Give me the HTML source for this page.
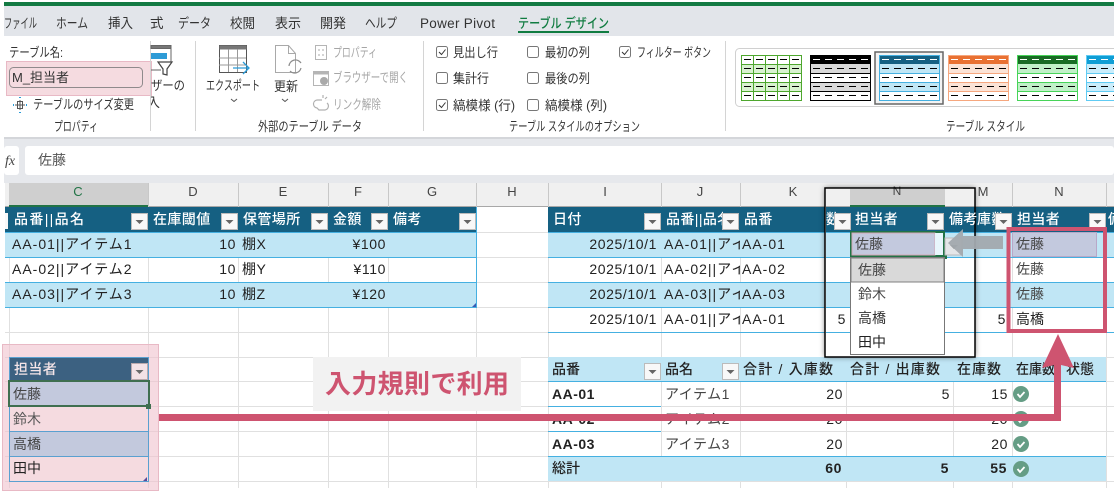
<!DOCTYPE html>
<html><head><meta charset="utf-8"><style>
html,body{margin:0;padding:0;background:#fff;width:1119px;height:494px;overflow:hidden}
svg{display:block}
text{font-family:"Liberation Sans","Noto Sans CJK JP",sans-serif;font-size:14px;fill:#222;white-space:pre}
.r{font-size:13px;fill:#333}
.g{font-size:13px;fill:#a6a6a6}
.tab{font-size:13.5px;fill:#333}
.w{fill:#fff;font-weight:500;letter-spacing:.4px}
.c{letter-spacing:1px}
.s{letter-spacing:.5px}
.e{text-anchor:end;letter-spacing:.6px}
.m{text-anchor:middle;font-size:13px;fill:#444}
.b{font-weight:700}
</style></head><body>
<svg width="1119" height="494" viewBox="0 0 1119 494" xmlns="http://www.w3.org/2000/svg">
<defs>
<g id="fb"><rect x=".5" y=".5" width="16" height="16" fill="#f8f8f8" stroke="#bbb"/><path d="M4.5 7h8l-4 4z" fill="#666"/></g>
<g id="ok"><circle r="8" fill="#659d85"/><path d="M-3.5 0l2.500 3 4.500-5" fill="none" stroke="#fff" stroke-width="1.800"/></g>
<path id="dash" d="M3 13.5h56M3 22.5h56M3 31.5h56M3 40.5h56" fill="none" stroke="#000" stroke-width="1" stroke-dasharray="7 5"/>
<path id="hd" d="M3 4.5h56" fill="none" stroke="#fff" stroke-width="1" stroke-dasharray="7 5"/>
</defs>

<rect x="4" y="2" width="1110" height="4" fill="#137a43"/>
<rect x="4" y="6" width="1110" height="30" fill="#e2e5ea"/>
<rect x="4" y="137" width="1110" height="46" fill="#e6e8ec"/>
<rect x="4" y="36" width="1110" height="101" fill="#fff"/>
<rect x="4" y="137" width="1110" height="2" fill="#d4d6da"/>

<text class="tab" x="4" y="28" textLength="33" lengthAdjust="spacingAndGlyphs">ファイル</text>
<text class="tab" x="56" y="28" textLength="32" lengthAdjust="spacingAndGlyphs">ホーム</text>
<text class="tab" x="108" y="28" textLength="25" lengthAdjust="spacingAndGlyphs">挿入</text>
<text class="tab" x="150" y="28">式</text>
<text class="tab" x="178" y="28" textLength="33" lengthAdjust="spacingAndGlyphs">データ</text>
<text class="tab" x="230" y="28" textLength="25" lengthAdjust="spacingAndGlyphs">校閲</text>
<text class="tab" x="275" y="28" textLength="26" lengthAdjust="spacingAndGlyphs">表示</text>
<text class="tab" x="320" y="28" textLength="26" lengthAdjust="spacingAndGlyphs">開発</text>
<text class="tab" x="365" y="28" textLength="32" lengthAdjust="spacingAndGlyphs">ヘルプ</text>
<text class="tab" x="420" y="28" textLength="75">Power Pivot</text>
<text class="tab" x="518" y="28" textLength="91" lengthAdjust="spacingAndGlyphs" style="fill:#107c41;font-weight:500">テーブル デザイン</text>
<rect x="518" y="31" width="91" height="2" fill="#107c41"/>

<!-- properties group -->
<text class="r" x="9" y="57" textLength="54" lengthAdjust="spacingAndGlyphs">テーブル名:</text>
<rect x="6.500" y="61.500" width="145" height="34" fill="#f5dbe0" stroke="#e8b9c5"/>
<rect x="9.500" y="67.500" width="133" height="20" rx="4" fill="#f5dbe0" stroke="#8f8a8c"/>
<text class="r" x="12" y="82">M_担当者</text>
<path d="M20 100v10M15 105h10M17.500 101.500h5v7h-5z" fill="none" stroke="#555"/>
<path d="M14 105h-1M27 105h-1M20 97v1M20 112v1" stroke="#2a9bd8" stroke-width="2"/>
<text class="r" x="33" y="109" textLength="101" lengthAdjust="spacingAndGlyphs">テーブルのサイズ変更</text>
<text class="r" x="54" y="131" textLength="44" lengthAdjust="spacingAndGlyphs">プロパティ</text>
<rect x="150" y="41" width="1" height="90" fill="#d4d4d4"/>
<rect x="195" y="41" width="1" height="90" fill="#d4d4d4"/>
<rect x="423" y="41" width="1" height="90" fill="#d4d4d4"/>
<rect x="725" y="41" width="1" height="90" fill="#d4d4d4"/>

<!-- slicer icon -->
<path d="M151 45.500h20v3h-20zM171 48v14M151 70h10" fill="#777" stroke="#666"/>
<rect x="151" y="53" width="16" height="6" fill="#2e9bd6"/>
<path d="M158 62h14l-5 7v6l-4-1v-5z" fill="#fff" stroke="#444" stroke-width="1.200"/>
<text class="r" x="151" y="90" textLength="34" lengthAdjust="spacingAndGlyphs">ザーの</text>
<svg x="151" y="92" width="20" height="20"><text class="r" x="-4" y="15">入</text></svg>

<!-- export -->
<rect x="219.500" y="45.500" width="27" height="27" fill="#fff" stroke="#555"/>
<rect x="219.500" y="45.500" width="27" height="4" fill="#777"/>
<path d="M219 58h27M219 65h27M228.500 49v23M237.500 49v23" stroke="#999" fill="none"/>
<path d="M233 68h15M243 62l6 6-6 6" fill="none" stroke="#2a9bd8" stroke-width="1.300"/>
<text class="r" x="206" y="90" textLength="54" lengthAdjust="spacingAndGlyphs">エクスポート</text>
<path d="M231 99l3 2.500 3-2.500M282 99l3 2.500 3-2.500" fill="none" stroke="#555"/>
<!-- refresh -->
<path d="M275.500 45.500h13l7 8v19h-20zM288.500 45.500v8h7" fill="#fff" stroke="#a9a9a9"/>
<path d="M289 66a6.500 6.500 0 0 1 12-3M301 68a6.500 6.500 0 0 1-11 3" fill="none" stroke="#8c8c8c" stroke-width="1.200"/>
<text class="r" x="274" y="91" textLength="24" lengthAdjust="spacingAndGlyphs">更新</text>
<!-- disabled -->
<rect x="315.500" y="45.500" width="11" height="14" fill="#fff" stroke="#b5b5b5"/>
<path d="M318 50h2M318 55h2M322 50h2M322 55h2" stroke="#aaa"/>
<text class="g" x="333" y="57" textLength="44" lengthAdjust="spacingAndGlyphs">プロパティ</text>
<rect x="313.500" y="71.500" width="15" height="14" fill="#fff" stroke="#b5b5b5"/>
<rect x="313.500" y="71.500" width="15" height="3" fill="#b5b5b5"/>
<circle cx="324" cy="81" r="4" fill="#aaa"/>
<text class="g" x="333" y="82" textLength="75" lengthAdjust="spacingAndGlyphs">ブラウザーで開く</text>
<path d="M322 100h-4a4 4 0 0 0-1 8l2 2h6a4 4 0 0 0 2-7M323 95v3M327 97l-2 2" fill="none" stroke="#b0b0b0" stroke-width="1.200"/>
<text class="g" x="333" y="109" textLength="48" lengthAdjust="spacingAndGlyphs">リンク解除</text>
<text class="r" x="258" y="131" textLength="104" lengthAdjust="spacingAndGlyphs">外部のテーブル データ</text>

<!-- checkboxes -->
<g fill="#fff" stroke="#777">
<rect x="436.500" y="46.500" width="11" height="11" rx="2"/><rect x="436.500" y="72.500" width="11" height="11" rx="2"/><rect x="436.500" y="99.500" width="11" height="11" rx="2"/>
<rect x="527.500" y="46.500" width="11" height="11" rx="2"/><rect x="527.500" y="72.500" width="11" height="11" rx="2"/><rect x="527.500" y="99.500" width="11" height="11" rx="2"/>
<rect x="619.500" y="46.500" width="11" height="11" rx="2"/>
</g>
<path d="M439 52l2.500 2.500 4-5M439 105l2.500 2.500 4-5M622 52l2.500 2.500 4-5" fill="none" stroke="#333"/>
<text class="r" x="453" y="57" textLength="45" lengthAdjust="spacingAndGlyphs">見出し行</text>
<text class="r" x="453" y="83" textLength="36" lengthAdjust="spacingAndGlyphs">集計行</text>
<text class="r" x="453" y="110" textLength="62" lengthAdjust="spacingAndGlyphs">縞模様 (行)</text>
<text class="r" x="545" y="57" textLength="45" lengthAdjust="spacingAndGlyphs">最初の列</text>
<text class="r" x="545" y="83" textLength="45" lengthAdjust="spacingAndGlyphs">最後の列</text>
<text class="r" x="545" y="110" textLength="62" lengthAdjust="spacingAndGlyphs">縞模様 (列)</text>
<text class="r" x="637" y="57" textLength="74" lengthAdjust="spacingAndGlyphs">フィルター ボタン</text>
<text class="r" x="509" y="131" textLength="131" lengthAdjust="spacingAndGlyphs">テーブル スタイルのオプション</text>
<text class="r" x="946" y="131" textLength="79" lengthAdjust="spacingAndGlyphs">テーブル スタイル</text>

<!-- gallery -->
<rect x="735.500" y="48.500" width="400" height="58" rx="4" fill="#fff" stroke="#d0d0d0"/>
<rect x="875" y="52" width="68" height="52" fill="#f3f3f3" stroke="#666" stroke-width="1.500"/>
<g transform="translate(741,55)"><rect width="61" height="46" fill="#fff"/><path d="M0 9h61v9H0zM0 27h61v9H0z" fill="#d9f2d0"/><path d="M12.500 0v46M24.500 0v46M36.500 0v46M48.500 0v46M0 9.500h61M0 18.500h61M0 27.500h61M0 36.500h61" stroke="#4ea72e" fill="none"/><rect x=".5" y=".5" width="60" height="45" fill="none" stroke="#4ea72e"/><use href="#dash"/><path d="M3 4.500h56" fill="none" stroke="#000" stroke-dasharray="7 5"/></g>
<g transform="translate(810,55)"><rect width="61" height="46" fill="#fff"/><rect width="61" height="9" fill="#000"/><path d="M0 9h61v9H0zM0 27h61v9H0z" fill="#d9d9d9"/><path d="M0 18.500h61M0 27.500h61M0 36.500h61" stroke="#000"/><rect x=".5" y=".5" width="60" height="45" fill="none" stroke="#000"/><use href="#dash"/><use href="#hd"/></g>
<g transform="translate(879,55)"><rect width="61" height="46" fill="#fff"/><rect width="61" height="9" fill="#156082"/><path d="M0 9h61v9H0zM0 27h61v9H0z" fill="#c0e6f5"/><path d="M0 18.500h61M0 27.500h61M0 36.500h61" stroke="#45b0e1"/><rect x=".5" y=".5" width="60" height="45" fill="none" stroke="#45b0e1"/><use href="#dash"/><use href="#hd"/></g>
<g transform="translate(948,55)"><rect width="61" height="46" fill="#fff"/><rect width="61" height="9" fill="#e97132"/><path d="M0 9h61v9H0zM0 27h61v9H0z" fill="#fbe3d6"/><path d="M0 18.500h61M0 27.500h61M0 36.500h61" stroke="#f6a77e"/><rect x=".5" y=".5" width="60" height="45" fill="none" stroke="#f6a77e"/><use href="#dash"/><use href="#hd"/></g>
<g transform="translate(1017,55)"><rect width="61" height="46" fill="#fff"/><rect width="61" height="9" fill="#196b24"/><path d="M0 9h61v9H0zM0 27h61v9H0z" fill="#c1f0c8"/><path d="M0 18.500h61M0 27.500h61M0 36.500h61" stroke="#47d459"/><rect x=".5" y=".5" width="60" height="45" fill="none" stroke="#47d459"/><use href="#dash"/><use href="#hd"/></g>
<g transform="translate(1086,55)"><rect width="61" height="46" fill="#fff"/><rect width="61" height="9" fill="#0f9ed5"/><path d="M0 9h61v9H0zM0 27h61v9H0z" fill="#caedfb"/><path d="M0 18.500h61M0 27.500h61M0 36.500h61" stroke="#60cbf3"/><rect x=".5" y=".5" width="60" height="45" fill="none" stroke="#60cbf3"/><use href="#dash"/><use href="#hd"/></g>
<rect x="1114" y="40" width="30" height="70" fill="#fff"/>

<!-- formula bar -->
<rect x="4" y="146" width="15" height="29" rx="3" fill="#fff"/>
<rect x="25" y="146" width="1089" height="29" rx="3" fill="#fff"/>
<text x="5" y="165" style="font-family:'Liberation Serif',serif;font-style:italic;font-size:14px;fill:#444">fx</text>
<text x="38" y="165" style="fill:#555;font-size:14px">佐藤</text>

<!-- column headers -->
<rect x="5" y="183" width="1109" height="24" fill="#f0f0f0"/>
<rect x="9" y="183" width="139" height="24" fill="#cfcfcf"/>
<rect x="5" y="206" width="1109" height="1" fill="#a8a8a8"/>
<rect x="9" y="205" width="139" height="2" fill="#217346"/>
<path d="M148.500 183v24M238.500 183v24M328.500 183v24M388.500 183v24M476.500 183v24M548.500 183v24M661.500 183v24M740.500 183v24M1012.500 183v24M1106.500 183v24" stroke="#c8c8c8"/>
<g style="text-anchor:middle">
<text class="m" x="78" y="196" style="fill:#217346">C</text>
<text class="m" x="193" y="196">D</text><text class="m" x="283" y="196">E</text><text class="m" x="358" y="196">F</text><text class="m" x="432" y="196">G</text><text class="m" x="512" y="196">H</text><text class="m" x="605" y="196">I</text><text class="m" x="700" y="196">J</text><text class="m" x="793" y="196">K</text><text class="m" x="983" y="196">M</text><text class="m" x="1059" y="196">N</text>
</g>

<!-- grid -->
<path d="M9.500 207v281M148.500 207v281M238.500 207v281M328.500 207v281M388.500 207v281M476.500 207v281M548.500 207v281M661.500 207v281M740.500 207v281M846.500 207v281M953.500 207v281M1012.500 207v281M1106.500 207v281" stroke="#e0e0e0"/>
<path d="M5 232.500h1109M5 257.500h1109M5 282.500h1109M5 307.500h1109M5 332.500h1109M5 357.500h1109M5 381.500h1109M5 406.500h1109M5 431.500h1109M5 456.500h1109M5 481.500h1109" stroke="#e0e0e0"/>

<!-- table 1 -->
<rect x="5" y="207" width="472" height="25" fill="#156082"/>
<rect x="5" y="232" width="472" height="25" fill="#c0e6f5"/>
<rect x="5" y="282" width="472" height="25" fill="#c0e6f5"/>
<path d="M5 232.500h472M5 257.500h472M5 282.500h472M5 307.500h472M476.500 207v101" stroke="#45b0e1"/>
<rect x="5" y="213" width="3" height="16" fill="#f8f8f8"/>
<text class="w" x="14" y="224" textLength="70" style="letter-spacing:0">品番||品名</text>
<text class="w" x="153" y="224">在庫閾値</text>
<text class="w" x="243" y="224">保管場所</text>
<text class="w" x="333" y="224">金額</text>
<text class="w" x="393" y="224">備考</text>
<use href="#fb" x="131" y="213"/><use href="#fb" x="221" y="213"/><use href="#fb" x="311" y="213"/><use href="#fb" x="371" y="213"/><use href="#fb" x="459" y="213"/>
<text class="c" x="12" y="249">AA-01||アイテム1</text>
<text class="c" x="12" y="274">AA-02||アイテム2</text>
<text class="c" x="12" y="299">AA-03||アイテム3</text>
<text class="e" x="236" y="249">10</text><text class="e" x="236" y="274">10</text><text class="e" x="236" y="299">10</text>
<text class="s" x="242" y="249">棚X</text><text class="s" x="242" y="274">棚Y</text><text class="s" x="242" y="299">棚Z</text>
<text class="e" x="386" y="249">¥100</text><text class="e" x="386" y="274">¥110</text><text class="e" x="386" y="299">¥120</text>
<path d="M472 307h4v-4z" fill="#3b5bb5"/>

<!-- table 2 -->
<rect x="548" y="207" width="566" height="25" fill="#156082"/>
<rect x="548" y="232" width="566" height="25" fill="#c0e6f5"/>
<rect x="548" y="282" width="566" height="25" fill="#c0e6f5"/>
<path d="M548 232.500h566M548 257.500h566M548 282.500h566M548 307.500h566M548 332.500h566" stroke="#45b0e1"/>
<text class="w" x="553" y="224">日付</text>
<svg x="661" y="207" width="62" height="25"><text class="w" x="5" y="17">品番||品名</text></svg>
<text class="w" x="744" y="224">品番</text>
<use href="#fb" x="644" y="213"/><use href="#fb" x="722" y="213"/>
<g>
<text class="e" x="657" y="249">2025/10/1</text><text class="e" x="657" y="274">2025/10/1</text><text class="e" x="657" y="299">2025/10/1</text><text class="e" x="657" y="324">2025/10/1</text>
<svg x="661" y="232" width="79" height="100">
<text class="c" x="3" y="17">AA-01||アイテム1</text><text class="c" x="3" y="42">AA-02||アイテム2</text><text class="c" x="3" y="67">AA-03||アイテム3</text><text class="c" x="3" y="92">AA-01||アイテム1</text>
</svg>
<text class="c" x="742" y="249">AA-01</text><text class="c" x="742" y="274">AA-02</text><text class="c" x="742" y="299">AA-03</text><text class="c" x="742" y="324">AA-01</text>
</g>

<!-- pivot -->
<rect x="548" y="357" width="558" height="24" fill="#c0e6f5"/>
<rect x="548" y="456" width="558" height="25" fill="#c0e6f5"/>
<path d="M548 381.500h558M548 456.500h558M548 406.500h113M548 431.500h113" stroke="#45b0e1"/>
<text class="b" x="552" y="374" style="font-weight:500">品番</text>
<text x="665" y="374" style="font-weight:500">品名</text>
<use href="#fb" x="644" y="363"/><use href="#fb" x="722" y="363"/>
<text x="743" y="374" textLength="90" style="font-weight:500">合計 / 入庫数</text>
<text x="850" y="374" textLength="90" style="font-weight:500">合計 / 出庫数</text>
<text x="957" y="374" textLength="44" style="font-weight:500">在庫数</text>
<text x="1016" y="374" textLength="39" lengthAdjust="spacingAndGlyphs" style="font-weight:500">在庫数</text>
<text x="1066" y="374" style="font-weight:500">状態</text>
<text class="b" x="552" y="399" style="letter-spacing:.5px">AA-01</text><text class="b" x="552" y="424" style="letter-spacing:.5px">AA-02</text><text class="b" x="552" y="449" style="letter-spacing:.5px">AA-03</text>
<text x="552" y="473" style="font-weight:500">総計</text>
<text x="665" y="399" style="fill:#444;letter-spacing:.5px">アイテム1</text><text x="665" y="424" style="fill:#444;letter-spacing:.5px">アイテム2</text><text x="665" y="449" style="fill:#444;letter-spacing:.5px">アイテム3</text>
<text class="e" x="843" y="399">20</text><text class="e" x="843" y="424">20</text><text class="e" x="843" y="449">20</text>
<text class="e" x="950" y="399">5</text>
<text class="e" x="1008" y="399">15</text><text class="e" x="1008" y="424">20</text><text class="e" x="1008" y="449">20</text>
<text class="e b" x="842" y="473">60</text><text class="e b" x="949" y="473">5</text><text class="e b" x="1007" y="473">55</text>
<use href="#ok" x="1021" y="394"/><use href="#ok" x="1021" y="419"/><use href="#ok" x="1021" y="444"/><use href="#ok" x="1021" y="469"/>

<!-- pasted black frame -->
<rect x="825" y="188" width="150" height="169" fill="#fff" style="filter:drop-shadow(0 0 3px rgba(0,0,0,.55))"/>
<rect x="826" y="189" width="149" height="18" fill="#f0f0f0"/>
<rect x="850" y="189" width="95" height="18" fill="#cfcfcf"/>
<rect x="826" y="206" width="149" height="1" fill="#a8a8a8"/>
<rect x="850" y="205" width="95" height="2" fill="#217346"/>
<text class="m" x="897" y="195" style="font-size:12px">N</text>
<rect x="826" y="207" width="149" height="25" fill="#156082"/>
<rect x="826" y="232" width="149" height="25" fill="#c0e6f5"/>
<rect x="826" y="282" width="149" height="25" fill="#c0e6f5"/>
<path d="M826 232.500h149M826 257.500h149M826 282.500h149M826 307.500h149M826 332.500h149" stroke="#45b0e1"/>
<svg x="826" y="207" width="14" height="25"><text class="w" x="0" y="17">数</text></svg>
<use href="#fb" x="834" y="213"/>
<text class="w" x="855" y="224">担当者</text>
<use href="#fb" x="927" y="213"/>
<text class="e" x="846" y="324">5</text>
<rect x="825" y="188" width="150" height="169" fill="none" stroke="#000" stroke-width="1.500"/>
<svg x="948" y="207" width="30" height="25"><text class="w" x="1" y="17">備考</text></svg>
<text class="w" x="977" y="224">庫数</text>
<use href="#fb" x="995" y="213"/>
<text class="w" x="1017" y="224">担当者</text>
<use href="#fb" x="1089" y="213"/>
<svg x="1107" y="207" width="7" height="25"><text class="w" x="1" y="17">備</text></svg>
<text class="e" x="1006" y="324">5</text>

<!-- selected cell -->
<rect x="851" y="232" width="93" height="24" fill="#fff" stroke="#217346" stroke-width="2"/>
<rect x="852" y="233" width="83" height="22" fill="#c3c9de" stroke="#d6a6b6"/>
<rect x="935" y="233" width="8" height="22" fill="#e8f6fc"/>
<rect x="942" y="255" width="5" height="4" fill="#217346"/>
<text x="855" y="249" style="fill:#444">佐藤</text>
<rect x="945" y="238" width="17" height="17" fill="#e4e6e8" stroke="#bbb"/>
<path d="M950 245h8l-4 4z" fill="#777"/>
<path d="M948 243l15-14v7h40v13h-40v8z" fill="#a2a9ae" opacity=".95"/>

<!-- dropdown -->
<rect x="850.500" y="257.500" width="94" height="97" fill="#fff" stroke="#777"/>
<rect x="851" y="258" width="93" height="24" fill="#d9d9d9" stroke="#808080"/>
<text x="858" y="275" style="fill:#444">佐藤</text>
<text x="858" y="299" style="fill:#444">鈴木</text>
<text x="858" y="323" style="fill:#333">高橋</text>
<text x="858" y="347">田中</text>

<!-- right column values -->
<rect x="1012.500" y="232.500" width="84" height="24" fill="#c3c9de" stroke="#b8a8c8"/>
<text x="1016" y="249" style="fill:#444">佐藤</text>
<text x="1016" y="274" style="fill:#444">佐藤</text>
<text x="1016" y="299" style="fill:#444">佐藤</text>
<text x="1016" y="324">高橋</text>

<!-- left pink block -->
<rect x="2.500" y="344.500" width="156" height="146" fill="#f0c4ce" fill-opacity=".62" stroke="#e8b9c5"/>
<rect x="9" y="357" width="139" height="24" fill="#3c6181"/>
<rect x="9.500" y="357.500" width="139" height="124" fill="none" stroke="#5aa0d0"/>
<path d="M9 406.500h140M9 431.500h140M9 456.500h140" stroke="#5aa0d0"/>
<rect x="10" y="407" width="138" height="24" fill="#f5dbe0"/><rect x="10" y="457" width="138" height="24" fill="#f5dbe0"/>
<rect x="10" y="432" width="138" height="24" fill="#c3c9dd"/>
<rect x="10" y="381" width="138" height="25" fill="#c3c9dd"/>
<rect x="9" y="381" width="140" height="25" fill="none" stroke="#3f6f50" stroke-width="2"/>
<rect x="146" y="404" width="5" height="5" fill="#3f6f50"/>
<text class="w" x="14" y="374" style="fill:#f5e5e8">担当者</text>
<rect x="131.500" y="363.500" width="16" height="16" fill="#f3e2e6" stroke="#b9a9ad"/><path d="M135.500 370h8l-4 4z" fill="#6a6a6a"/>
<text x="13" y="399" style="fill:#444">佐藤</text>
<text x="13" y="424" style="fill:#555">鈴木</text>
<text x="13" y="449" style="fill:#444">高橋</text>
<text x="13" y="473">田中</text>
<path d="M143 481h4v-4z" fill="#5a4a9a"/>

<!-- label -->
<rect x="313" y="357" width="208" height="54" fill="#f2f2f2"/>
<text x="325" y="393" textLength="184" style="font-size:26px;font-weight:700;fill:#ce5470">入力規則で利用</text>

<!-- callout box + arrow -->
<rect x="1008.500" y="229" width="96.500" height="102" fill="none" stroke="#ce5470" stroke-width="4"/>
<path d="M159 414h895v-49l-12 3 16-34 16 34-13-3v56H159z" fill="#ce5470"/>

<rect x="1114" y="0" width="5" height="494" fill="#fff"/>
</svg>
</body></html>
